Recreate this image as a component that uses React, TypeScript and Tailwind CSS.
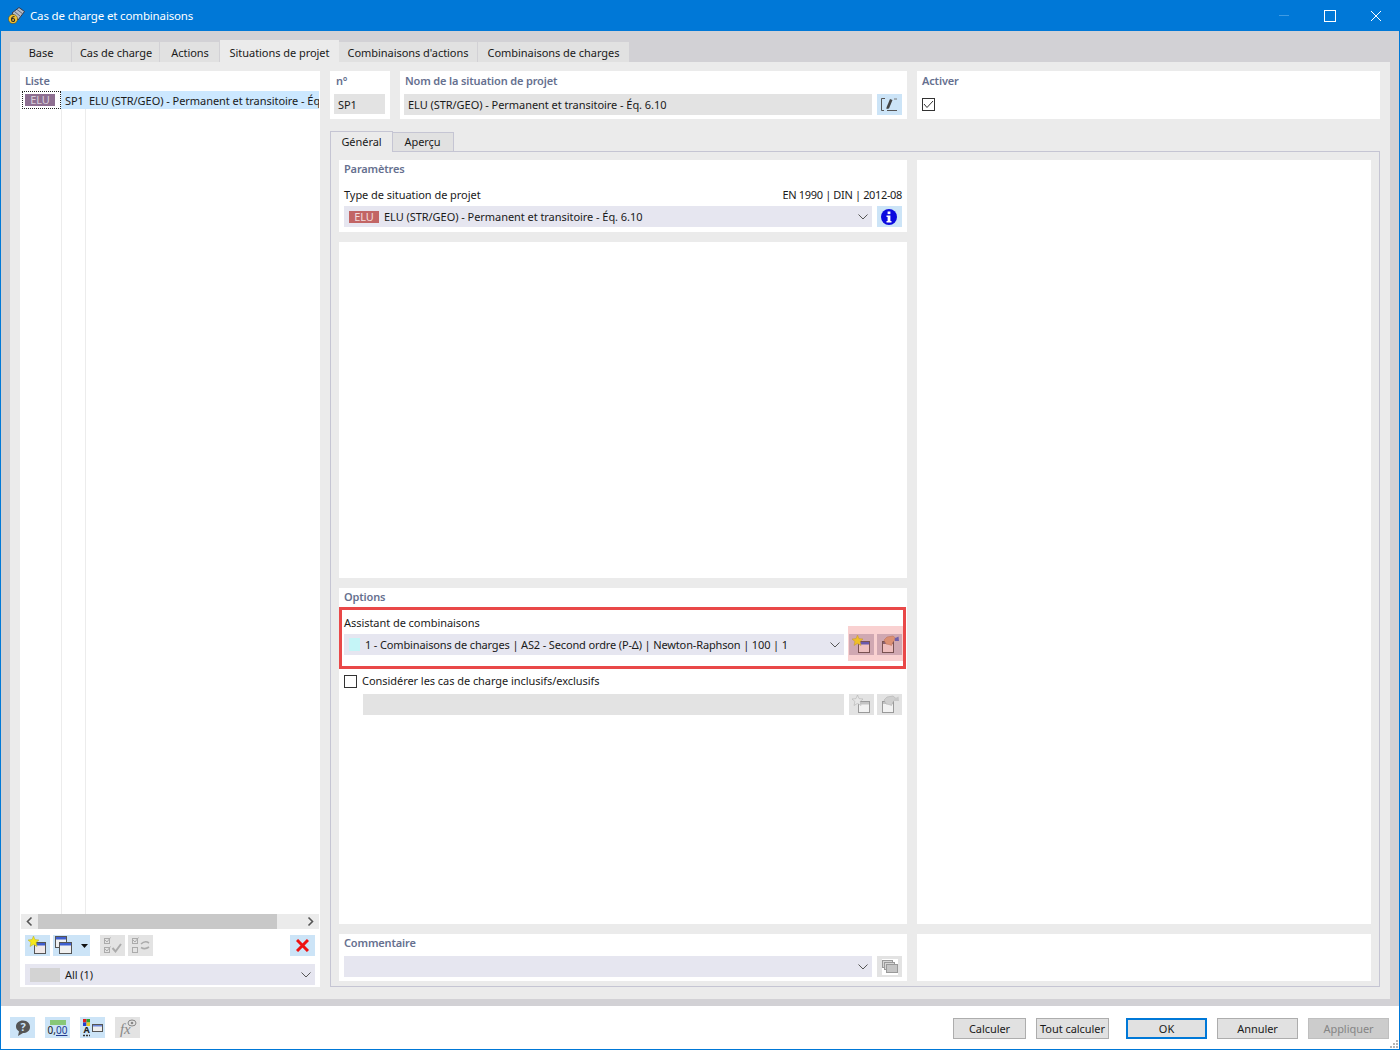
import React from "react";

const LBL = "text-[11px] leading-[16px] font-semibold tracking-[-0.15px] text-[#66708f]";

function NewIcon({ off }: { off?: boolean }) {
  return (
    <svg width="20" height="19" viewBox="0 0 20 19">
      <rect x="6.5" y="6.5" width="11" height="11" fill={off ? "#f2f2f2" : "#f0e9e9"} stroke={off ? "#9a9a9a" : "#555"} />
      <rect x="7" y="7" width="10" height="2.5" fill={off ? "#c4c4c4" : "#3f5fcf"} />
      <path d="M5.5 0 L7 3.6 L11 4 L8.1 6.5 L9 10.5 L5.5 8.4 L2 10.5 L2.9 6.5 L0 4 L4 3.6 Z" fill={off ? "#e6e6e6" : "#f5e81a"} stroke={off ? "#aaa" : "#b4ac2c"} strokeWidth="0.5" />
    </svg>
  );
}

function HandIcon({ off }: { off?: boolean }) {
  return (
    <svg width="20" height="19" viewBox="0 0 20 19">
      <rect x="2.5" y="6.5" width="11" height="11" fill={off ? "#f2f2f2" : "#f0e5e5"} stroke={off ? "#9a9a9a" : "#555"} />
      <rect x="3" y="7" width="10" height="2" fill={off ? "#c4c4c4" : "#6b6b80"} />
      <path d="M4 5 L7 2 L13 1 L16 3.5 L13 7 L11.5 10.5 L9 9.5 L6 9 Z" fill={off ? "#cfcfcf" : "#d9a982"} stroke={off ? "#aaa" : "#a97b5c"} strokeWidth="0.5" />
      <path d="M14.5 3.5 L18.5 1.5 L19 6 L15 6 Z" fill={off ? "#c8c8c8" : "#4a67c9"} />
    </svg>
  );
}

function DoubleWin() {
  return (
    <svg width="20" height="19" viewBox="0 0 20 19">
      <rect x="0.5" y="0.5" width="11" height="11" fill="#f0f0f0" stroke="#555" />
      <rect x="1" y="1" width="10" height="2.5" fill="#3f5fcf" />
      <rect x="4.5" y="6.5" width="12" height="11" fill="#f0f0f0" stroke="#555" />
      <rect x="5" y="7" width="11" height="2.5" fill="#3f5fcf" />
    </svg>
  );
}

function CheckAll() {
  return (
    <svg width="20" height="17" viewBox="0 0 20 17" fill="none" stroke="#ababab">
      <rect x="1.5" y="1.5" width="5" height="5" />
      <rect x="1.5" y="10.5" width="5" height="5" />
      <path d="M2 3 L4 5 L7.5 0.5 M2 12 L4 14 L7.5 9.5" />
      <path d="M9.5 11 L12.5 14.5 L18 7" strokeWidth="2" />
    </svg>
  );
}

function CheckSwap() {
  return (
    <svg width="20" height="17" viewBox="0 0 20 17" fill="none" stroke="#ababab">
      <rect x="1.5" y="1.5" width="5" height="5" />
      <rect x="1.5" y="10.5" width="5" height="5" />
      <path d="M2 3 L4 5 L7.5 0.5" />
      <path d="M10 7 Q14 3 18 6 M18 10 Q14 13 10 10.5" strokeWidth="1.6" />
    </svg>
  );
}

function Chevron() {
  return (
    <svg width="10" height="6" viewBox="0 0 10 6" fill="none" stroke="#555" strokeWidth="1">
      <path d="M0.5 0.5 L5 5 L9.5 0.5" />
    </svg>
  );
}

function IconBtn({ tone, children, w = "w-[25px]" }: { tone: "blue" | "gray" | "mute"; children: React.ReactNode; w?: string }) {
  const bg = tone === "blue" ? "bg-[#cce4f7]" : tone === "mute" ? "bg-[#c9c9d6]" : "bg-[#e3e3e3]";
  return <div className={`${w} h-[21px] shrink-0 flex items-center justify-center ${bg}`}>{children}</div>;
}

function Select({ children, cls }: { children: React.ReactNode; cls: string }) {
  return (
    <div className={`h-[21px] bg-[#e6e6f0] flex items-center ${cls}`}>
      <div className="flex-1 flex items-center min-w-0">{children}</div>
      <div className="w-[10px] mr-[4px] flex items-center"><Chevron /></div>
    </div>
  );
}

function FootBtn({ label, cls }: { label: string; cls: string }) {
  return (
    <div className={`h-[21px] flex items-center justify-center text-[11px] whitespace-nowrap pt-px ${cls}`}>{label}</div>
  );
}

export default function App() {
  return (
    <div
      className="w-[1400px] h-[1050px] flex flex-col border-x border-b border-[#0078d7] overflow-hidden bg-white text-[#1a1a1a] text-[11px] tracking-[-0.05px]"
      style={{ fontFamily: '"Noto Sans", "Open Sans", sans-serif' }}
    >
      {/* title bar */}
      <div className="h-[31px] shrink-0 bg-[#0078d7] flex items-center text-white pl-[7px]">
        <svg width="17" height="17" viewBox="0 0 17 17">
          <path d="M4 6 L11 0.5 L16.5 4.5 L10 13 Z" fill="#b4bcc8" stroke="#33384a" strokeWidth="1" />
          <path d="M6.5 4.5 L12.5 9.5 M9 2.5 L15 7" stroke="#5d6678" strokeWidth="1" />
          <circle cx="5" cy="12" r="4.6" fill="#f2c230" stroke="#453c14" strokeWidth="0.5" />
          <path d="M6.5 9.5 Q3.5 9.5 3.5 12.5 Q3.5 14.5 5 14.5 Q6.6 14.5 6.6 12.9 Q6.6 11.5 5 11.5 Q4 11.5 3.6 12.5" fill="none" stroke="#2b2b2b" strokeWidth="1.1" />
        </svg>
        <span className="ml-[5px] pt-px text-[11.5px] tracking-[-0.15px]">Cas de charge et combinaisons</span>
        <div className="ml-auto flex items-center">
          <div className="w-[10px] h-px bg-[#3f9be3] mr-[35px]" />
          <div className="w-[10px] h-[10px] border border-white mr-[34px] box-content" />
          <svg width="12" height="12" viewBox="0 0 12 12" className="mr-[17px]" fill="none" stroke="#fff" strokeWidth="1">
            <path d="M1 1 L11 11 M11 1 L1 11" />
          </svg>
        </div>
      </div>

      {/* body */}
      <div className="flex-1 min-h-0 bg-[#d2d1d5] pt-[9px] px-[9px] pb-[7px] flex flex-col">
        {/* tabs */}
        <div className="h-[22px] shrink-0 flex items-end text-[11px] leading-[22px]">
          <div className="w-[61px] h-[20px] pl-px bg-[#e1e1e1] text-center">Base</div>
          <div className="w-[87px] h-[20px] pl-px ml-px bg-[#e1e1e1] text-center">Cas de charge</div>
          <div className="w-[59px] h-[20px] pl-px ml-px bg-[#e1e1e1] text-center">Actions</div>
          <div className="w-[119px] h-[22px] ml-px bg-[#ebebeb] text-center leading-[26px]">Situations de projet</div>
          <div className="w-[138px] h-[20px] bg-[#e1e1e1] text-center">Combinaisons d'actions</div>
          <div className="w-[152px] h-[20px] bg-[#e1e1e1] text-center border-l border-[#d2d1d5]">Combinaisons de charges</div>
        </div>

        {/* panel */}
        <div className="flex-1 min-h-0 bg-[#ebebeb] pt-[9px] pl-[10px] pr-[10px] pb-[12px] flex gap-[10px]">
          {/* left */}
          <div className="w-[300px] shrink-0 bg-white flex flex-col px-px">
            <div className={`${LBL} pl-[4px] pt-[2px] h-[20px]`}>Liste</div>
            <div className="flex-1 min-h-0 relative flex flex-col">
              <div className="h-[18px] shrink-0 flex pl-px">
                <div className="w-[39px] h-[18px] border border-dotted border-[#222] flex items-center pl-[2px]">
                  <div className="w-[30px] h-[12px] bg-[#8e6f91] text-[#d9cfdb] text-[11px] leading-[12px] text-center">ELU</div>
                </div>
                <div className="flex-1 bg-[#cce8ff] flex items-center overflow-hidden whitespace-nowrap pt-[2px]">
                  <span className="w-[24px] pl-[4px] shrink-0">SP1</span>
                  <span className="pl-[4px]">ELU (STR/GEO) - Permanent et transitoire - Éq. 6.10</span>
                </div>
              </div>
              <div className="flex-1 flex pl-[40px]">
                <div className="w-[25px] border-x border-[#ececec]" />
                <div className="flex-1" />
              </div>
              <div className="h-[15px] shrink-0 bg-[#ebebeb] flex items-center">
                <svg width="17" height="15" viewBox="0 0 17 15" fill="none" stroke="#555" strokeWidth="1.6"><path d="M10.5 3.5 L6.5 7.5 L10.5 11.5" /></svg>
                <div className="w-[239px] h-full bg-[#c8c8c8]" />
                <div className="flex-1" />
                <svg width="17" height="15" viewBox="0 0 17 15" fill="none" stroke="#555" strokeWidth="1.6"><path d="M6.5 3.5 L10.5 7.5 L6.5 11.5" /></svg>
              </div>
            </div>
            <div className="h-[21px] mt-[6px] shrink-0 flex px-[4px]">
              <IconBtn tone="blue"><NewIcon /></IconBtn>
              <div className="ml-[3px] w-[37px] h-[21px] bg-[#cce4f7] flex items-center pl-[2px] gap-[6px]">
                <DoubleWin />
                <svg width="7" height="4" viewBox="0 0 7 4"><path d="M0 0 H7 L3.5 4 Z" fill="#111" /></svg>
              </div>
              <div className="ml-[10px]"><IconBtn tone="gray"><CheckAll /></IconBtn></div>
              <div className="ml-[3px]"><IconBtn tone="gray"><CheckSwap /></IconBtn></div>
              <div className="ml-auto">
                <IconBtn tone="blue">
                  <svg width="13" height="13" viewBox="0 0 13 13" fill="none" stroke="#ee1111" strokeWidth="3"><path d="M1 1 L12 12 M12 1 L1 12" /></svg>
                </IconBtn>
              </div>
            </div>
            <div className="px-[4px] mt-[8px] mb-[2px]">
              <Select cls="w-full">
                <div className="ml-[5px] w-[30px] h-[14px] bg-[#d3d3d3]" />
                <span className="ml-[5px] pt-[2px]">All (1)</span>
              </Select>
            </div>
          </div>

          {/* right */}
          <div className="flex-1 min-w-0 flex flex-col">
            {/* header row */}
            <div className="h-[48px] shrink-0 flex gap-[10px]">
              <div className="w-[60px] bg-white px-[4px]">
                <div className={`${LBL} pt-[2px] pl-[2px] h-[23px]`}>n°</div>
                <div className="h-[20px] bg-[#e3e3e3] pl-[4px] pt-[2px] w-[51px] flex items-center">SP1</div>
              </div>
              <div className="w-[507px] bg-white px-[4px]">
                <div className={`${LBL} pt-[2px] pl-[1px] h-[23px]`}>Nom de la situation de projet</div>
                <div className="flex gap-[5px]">
                  <div className="w-[468px] h-[21px] bg-[#e3e3e3] pl-[4px] leading-[21px]">ELU (STR/GEO) - Permanent et transitoire - Éq. 6.10</div>
                  <IconBtn tone="blue">
                    <svg width="19" height="17" viewBox="0 0 19 17" fill="none">
                      <path d="M5 2.5 H1.5 V14.5 H4 M7 14.5 H17" stroke="#555" />
                      <path d="M6.5 11.5 L10 3 L12.5 4 L9 12.5 L6.5 13 Z" fill="#444" />
                      <path d="M14 3 H17" stroke="#777" />
                    </svg>
                  </IconBtn>
                </div>
              </div>
              <div className="flex-1 bg-white px-[5px]">
                <div className={`${LBL} pt-[2px] h-[27px]`}>Activer</div>
                <div className="w-[13px] h-[13px] border border-[#333] flex items-center justify-center">
                  <svg width="11" height="9" viewBox="0 0 11 9" fill="none" stroke="#333"><path d="M1 4 L4 7.5 L10 1" /></svg>
                </div>
              </div>
            </div>

            {/* subtabs */}
            <div className="h-[21px] mt-[11px] shrink-0 flex items-end">
              <div className="w-[63px] h-[21px] bg-[#ebebeb] border-x border-t border-[#c5c5d3] text-center leading-[20px] relative top-px">Général</div>
              <div className="w-[61px] h-[19px] pr-px bg-[#e1e1e1] border-r border-t border-[#c5c5d3] text-center leading-[18px]">Aperçu</div>
            </div>

            {/* subtab content */}
            <div className="flex-1 min-h-0 border border-[#c5c5d3] pt-[8px] pl-[8px] pr-[8px] pb-[7px] grid grid-cols-[568px_454px] grid-rows-[72px_336px_336px_47px] gap-x-[10px] gap-y-[10px]">
              {/* Paramètres */}
              <div className="bg-white px-[5px]">
                <div className={`${LBL} pt-px h-[27px]`}>Paramètres</div>
                <div className="h-[18px] flex justify-between leading-[16px]">
                  <span>Type de situation de projet</span>
                  <span className="tracking-[-0.35px]">EN 1990 | DIN | 2012-08</span>
                </div>
                <div className="flex gap-[5px] mt-[1px]">
                  <Select cls="w-[528px]">
                    <div className="ml-[5px] w-[30px] h-[12px] bg-[#c26565] text-[#f3dcdc] text-[11px] leading-[12px] text-center">ELU</div>
                    <span className="ml-[5px] pt-[2px]">ELU (STR/GEO) - Permanent et transitoire - Éq. 6.10</span>
                  </Select>
                  <IconBtn tone="blue">
                    <svg width="16" height="16" viewBox="0 0 16 16" className="mr-px">
                      <circle cx="8" cy="8" r="8" fill="#0a0adf" />
                      <rect x="6.6" y="2.5" width="2.8" height="2.6" fill="#fff" />
                      <path d="M5.5 6.5 H9.4 V12 H10.5 V13.5 H5.5 V12 H6.6 V8 H5.5 Z" fill="#fff" />
                    </svg>
                  </IconBtn>
                </div>
              </div>

              {/* right big blank */}
              <div className="bg-white row-span-3" />

              {/* blank */}
              <div className="bg-white" />

              {/* Options */}
              <div className="bg-white px-[5px] relative">
                <div className={`${LBL} pt-px h-[27px]`}>Options</div>
                <div className="leading-[16px] h-[19px]">Assistant de combinaisons</div>
                <div className="flex">
                  <Select cls="w-[500px]">
                    <div className="ml-[5px] w-[11px] h-[13px] bg-[#c5f5f7]" />
                    <span className="ml-[5px] pt-[2px] tracking-[-0.14px]">1 - Combinaisons de charges | AS2 - Second ordre (P-Δ) | Newton-Raphson | 100 | 1</span>
                  </Select>
                  <div className="ml-[5px]"><IconBtn tone="mute"><NewIcon /></IconBtn></div>
                  <div className="ml-[3px]"><IconBtn tone="mute"><HandIcon /></IconBtn></div>
                </div>
                <div className="flex items-center mt-[19px] h-[14px]">
                  <div className="w-[13px] h-[13px] border border-[#333]" />
                  <span className="ml-[5px]">Considérer les cas de charge inclusifs/exclusifs</span>
                </div>
                <div className="flex mt-[6px] pl-[19px]">
                  <div className="w-[481px] h-[21px] bg-[#e3e3e3]" />
                  <div className="ml-[5px]"><IconBtn tone="gray"><NewIcon off /></IconBtn></div>
                  <div className="ml-[3px]"><IconBtn tone="gray"><HandIcon off /></IconBtn></div>
                </div>
                {/* review highlight overlay */}
                <div className="absolute left-0 top-[19px] w-[567px] h-[62px] border-[3px] border-[#e94848] pointer-events-none" />
                <div className="absolute left-[509px] top-[38px] w-[55px] h-[35px] bg-[#e9484840] pointer-events-none" />
              </div>

              {/* Commentaire */}
              <div className="bg-white px-[5px]">
                <div className={`${LBL} pt-px h-[22px]`}>Commentaire</div>
                <div className="flex gap-[5px]">
                  <Select cls="w-[528px]"><span /></Select>
                  <IconBtn tone="gray">
                    <svg width="16" height="16" viewBox="0 0 16 16" className="bg-white">
                      <rect x="0.5" y="1.5" width="10" height="7" fill="#d5d5d5" stroke="#999" />
                      <rect x="2.5" y="3.5" width="10" height="7" fill="#d5d5d5" stroke="#999" />
                      <rect x="4.5" y="5.5" width="11" height="8" fill="#c4c4c4" stroke="#999" />
                    </svg>
                  </IconBtn>
                </div>
              </div>
              <div className="bg-white" />
            </div>
          </div>
        </div>
      </div>

      {/* footer */}
      <div className="h-[43px] shrink-0 bg-white flex items-start pt-[11px] pl-[9px] pr-[10px] relative">
        <IconBtn tone="blue">
          <svg width="18" height="18" viewBox="0 0 18 18">
            <path d="M9 1.5 C13.5 1.5 16 4.5 16 8 C16 12 12.5 14 9 14 L4 17 L5 12.5 C3 11 2 9.5 2 7.5 C2 4 5 1.5 9 1.5 Z" fill="#555" />
            <text x="9" y="12" textAnchor="middle" fontSize="11" fontWeight="700" fill="#cce4f7">?</text>
          </svg>
        </IconBtn>
        <div className="ml-[10px]">
          <IconBtn tone="blue">
            <div className="flex flex-col items-center w-[19px]">
              <div className="w-[16px] h-[5px] bg-[#88c878]" />
              <div className="text-[10px] leading-[11px] tracking-normal">0,<span className="underline text-[#233a8f]">00</span></div>
            </div>
          </IconBtn>
        </div>
        <div className="ml-[10px]">
          <IconBtn tone="blue">
            <svg width="22" height="19" viewBox="0 0 22 19">
              <rect x="1" y="1" width="3.5" height="3.5" fill="#e02020" />
              <rect x="4.5" y="1" width="3.5" height="3.5" fill="#30a030" />
              <rect x="1" y="4.5" width="3.5" height="3.5" fill="#2040d0" />
              <rect x="4.5" y="4.5" width="3.5" height="3.5" fill="#e8c820" />
              <text x="4.5" y="15" textAnchor="middle" fontSize="9" fontWeight="700" fill="#222">A</text>
              <path d="M1 17.5 H8" stroke="#333" strokeDasharray="2 1" strokeWidth="1.5" />
              <rect x="10.5" y="6.5" width="10" height="7" fill="#eee" stroke="#555" />
              <rect x="11" y="7" width="9" height="1.5" fill="#6a86d8" />
            </svg>
          </IconBtn>
        </div>
        <div className="ml-[10px]">
          <IconBtn tone="gray">
            <svg width="22" height="19" viewBox="0 0 22 19" fill="none">
              <text x="3" y="16" fontSize="15" fontStyle="italic" fontFamily="Liberation Serif, serif" fill="#888">fx</text>
              <ellipse cx="15" cy="5" rx="4" ry="3" stroke="#888" />
              <circle cx="15" cy="5" r="1.3" fill="#888" />
            </svg>
          </IconBtn>
        </div>
        <div className="ml-auto flex items-center mt-px">
          <FootBtn label="Calculer" cls="w-[73px] bg-[#e1e1e1] border border-[#adadad]" />
          <FootBtn label="Tout calculer" cls="ml-[10px] w-[73px] bg-[#e1e1e1] border border-[#adadad]" />
          <FootBtn label="OK" cls="ml-[17px] w-[81px] bg-[#e1e1e1] border-2 border-[#0078d7]" />
          <FootBtn label="Annuler" cls="ml-[10px] w-[81px] bg-[#e1e1e1] border border-[#adadad]" />
          <FootBtn label="Appliquer" cls="ml-[10px] w-[81px] bg-[#cccccc] border border-[#bfbfbf] text-[#858585]" />
        </div>
        <svg width="10" height="10" viewBox="0 0 10 10" className="absolute right-0 bottom-0" fill="#b5b5b5">
          <rect x="7" y="1" width="2" height="2" /><rect x="4" y="4" width="2" height="2" /><rect x="7" y="4" width="2" height="2" />
          <rect x="1" y="7" width="2" height="2" /><rect x="4" y="7" width="2" height="2" /><rect x="7" y="7" width="2" height="2" />
        </svg>
      </div>
    </div>
  );
}
